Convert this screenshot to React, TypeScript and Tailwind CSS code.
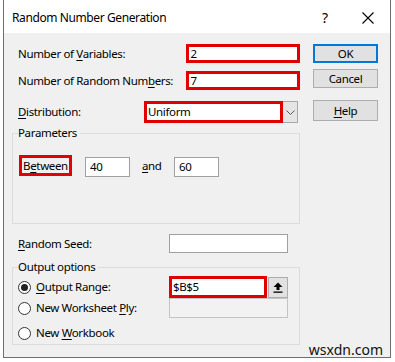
import React from 'react';

// access key underline, like the Windows dialogs
const U: React.FC<{ children: React.ReactNode }> = ({ children }) => (
  <span className="underline underline-offset-[2px] decoration-1">{children}</span>
);

const Radio: React.FC<{ checked?: boolean }> = ({ checked }) => (
  <span className="w-[13px] h-[13px] rounded-full border border-[#333] bg-white flex items-center justify-center shrink-0">
    {checked && <span className="w-[7px] h-[7px] rounded-full bg-[#222]" />}
  </span>
);

const Btn: React.FC<{ children: React.ReactNode; primary?: boolean; className?: string }> = ({ children, primary, className }) => (
  <div
    className={
      'w-[65px] flex items-center justify-center bg-[#e1e1e1] ' +
      (primary ? 'border-2 border-[#0078d7] ' : 'border border-[#adadad] ') +
      (className || '')
    }
  >
    {children}
  </div>
);

export default function App() {
  return (
    <div className="w-[395px] h-[362px] bg-white font-['Noto_Sans',sans-serif] text-[11.5px] tracking-[-0.35px] leading-none text-black whitespace-nowrap">
      <div className="relative ml-[3px] w-[388px] h-[358px] border border-t-0 border-[#6e6e6e] bg-[#f0f0f0] flex flex-col">
        {/* title bar */}
        <div className="h-[33px] shrink-0 bg-white flex items-center pl-[8px] pr-[16px] pt-[3px]">
          <span className="flex-1 text-[12px] tracking-[-0.4px]">Random Number Generation</span>
          <span className="mr-[34px] text-[14px] tracking-normal">?</span>
          <svg width="12" height="12" viewBox="0 0 12 12" className="text-black">
            <path d="M0.5 0.5 L11.5 11.5 M11.5 0.5 L0.5 11.5" stroke="currentColor" strokeWidth="1.1" />
          </svg>
        </div>

        <div className="flex">
          {/* left column */}
          <div className="w-[296px] pl-[8px] flex flex-col">
            <div className="mt-[11px] h-[19px] flex items-center">
              <span className="w-[175px] pl-[6px]">
                Number of <U>V</U>ariables:
              </span>
              <div className="w-[114px] h-[19px] border-[3px] border-[#e00000] bg-white flex items-center pl-[1px]">2</div>
            </div>
            <div className="mt-[8px] h-[19px] flex items-center">
              <span className="w-[175px] pl-[6px]">
                Number of Random Num<U>b</U>ers:
              </span>
              <div className="w-[114px] h-[19px] border-[3px] border-[#e00000] bg-white flex items-center pl-[1px]">7</div>
            </div>
            <div className="mt-[11px] h-[22px] flex items-center">
              <span className="w-[132px] pl-[6px]">
                <U>D</U>istribution:
              </span>
              <div className="w-[139px] h-[22px] border-[3px] border-[#e00000] bg-white flex items-center pl-[1px]">Uniform</div>
              <div className="w-[15px] h-[22px] bg-[#e5e5e5] border border-l-0 border-[#a8a8a8] flex items-center justify-center">
                <svg width="9" height="5" viewBox="0 0 9 5">
                  <path d="M0.5 0.5 L4.5 4.5 L8.5 0.5" fill="none" stroke="#555" strokeWidth="1" />
                </svg>
              </div>
            </div>

            {/* Parameters */}
            <fieldset className="mt-[1px] w-[288px] h-[100px] border border-[#dcdcdc] px-[5px]">
              <legend className="leading-[18px] pr-[3px]">Parameters</legend>
              <div className="mt-[12px] flex items-center">
                <div className="ml-[1px] w-[53px] h-[21px] border-[3px] border-[#e00000] flex items-center justify-center">
                  B<U>e</U>tween
                </div>
                <div className="ml-[13px] mt-[3px] w-[45px] h-[20px] border border-[#a0a0a0] bg-white flex items-center pl-[4px]">40</div>
                <span className="ml-[12px] w-[32px]">
                  <U>a</U>nd
                </span>
                <div className="mt-[3px] w-[45px] h-[20px] border border-[#a0a0a0] bg-white flex items-center pl-[4px]">60</div>
              </div>
            </fieldset>

            <div className="mt-[10px] h-[19px] flex items-center">
              <span className="w-[157px] pl-[6px]">
                <U>R</U>andom Seed:
              </span>
              <div className="w-[119px] h-[19px] border border-[#a0a0a0] bg-white" />
            </div>

            {/* Output options */}
            <fieldset className="mt-[5px] w-[288px] h-[87px] border border-[#dcdcdc] px-[5px]">
              <legend className="leading-[18px] pr-[3px]">Output options</legend>
              <div className="h-[22px] flex items-center">
                <div className="w-[151px] flex items-center gap-[5px]">
                  <Radio checked />
                  <span>
                    <U>O</U>utput Range:
                  </span>
                </div>
                <div className="w-[98px] h-[22px] border-[3px] border-[#e00000] bg-white flex items-center pl-[1px]">$B$5</div>
                <div className="ml-[1px] w-[20px] h-[21px] bg-[#e1e1e1] border border-[#adadad] flex items-center justify-center">
                  <svg width="10" height="11" viewBox="0 0 10 11">
                    <path d="M5 0.5 L9.5 5 H6.5 V8 H3.5 V5 H0.5 Z" fill="#000" />
                    <rect x="0.5" y="9.5" width="9" height="1.3" fill="#000" />
                  </svg>
                </div>
              </div>
              <div className="h-[20px] flex items-center">
                <div className="w-[151px] flex items-center gap-[5px]">
                  <Radio />
                  <span>
                    New Worksheet <U>P</U>ly:
                  </span>
                </div>
                <div className="w-[119px] h-[20px] border border-[#c4c4c4] bg-[#f2f2f2]" />
              </div>
              <div className="mt-[4px] h-[22px] flex items-center">
                <div className="flex items-center gap-[5px]">
                  <Radio />
                  <span>
                    New <U>W</U>orkbook
                  </span>
                </div>
              </div>
            </fieldset>
          </div>

          {/* right column: buttons */}
          <div className="ml-[13px] flex flex-col">
            <Btn primary className="mt-[11px] h-[19px]">OK</Btn>
            <Btn className="mt-[6px] h-[19px]">Cancel</Btn>
            <Btn className="mt-[12px] h-[21px]">
              <span>
                <U>H</U>elp
              </span>
            </Btn>
          </div>
        </div>

        {/* watermark */}
        <span className="absolute right-[7px] bottom-[0px] text-[14px] tracking-normal text-[#111]">wsxdn.com</span>
      </div>
    </div>
  );
}
